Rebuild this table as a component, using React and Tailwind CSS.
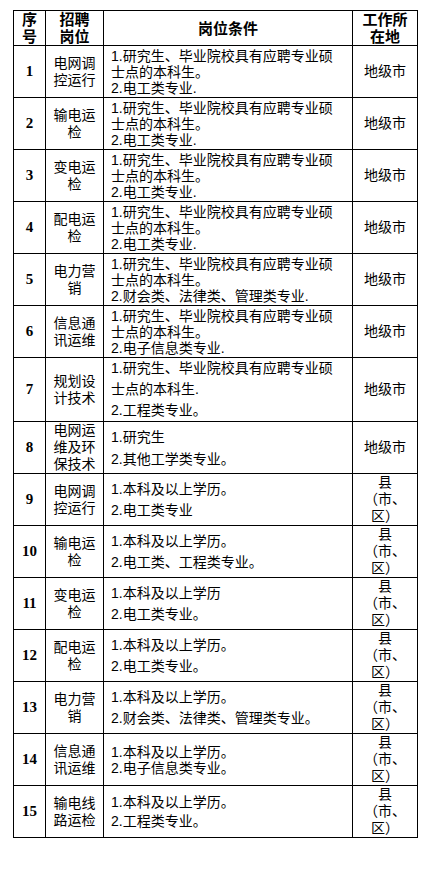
import React from "react";

const edu = "1.研究生、毕业院校具有应聘专业硕";

const rows = [
  { no: "1", job: ["电网调", "控运行"], cond: [edu, "士点的本科生。", "2.电工类专业."], place: "city", lh: "leading-[16px]" },
  { no: "2", job: ["输电运", "检"], cond: [edu, "士点的本科生。", "2.电工类专业."], place: "city", lh: "leading-[16px]" },
  { no: "3", job: ["变电运", "检"], cond: [edu, "士点的本科生。", "2.电工类专业."], place: "city", lh: "leading-[16px]" },
  { no: "4", job: ["配电运", "检"], cond: [edu, "士点的本科生。", "2.电工类专业."], place: "city", lh: "leading-[16px]" },
  { no: "5", job: ["电力营", "销"], cond: [edu, "士点的本科生。", "2.财会类、法律类、管理类专业."], place: "city", lh: "leading-[16px]" },
  { no: "6", job: ["信息通", "讯运维"], cond: [edu, "士点的本科生。", "2.电子信息类专业."], place: "city", lh: "leading-[16px]" },
  { no: "7", job: ["规划设", "计技术"], cond: [edu, "士点的本科生.", "2.工程类专业。"], place: "city", lh: "leading-[21px]", tall: true },
  { no: "8", job: ["电网运", "维及环", "保技术"], cond: ["1.研究生", "2.其他工学类专业。"], place: "city", lh: "leading-[22px]" },
  { no: "9", job: ["电网调", "控运行"], cond: ["1.本科及以上学历。", "2.电工类专业"], place: "county", lh: "leading-[21px]" },
  { no: "10", job: ["输电运", "检"], cond: ["1.本科及以上学历。", "2.电工类、工程类专业。"], place: "county", lh: "leading-[21px]" },
  { no: "11", job: ["变电运", "检"], cond: ["1.本科及以上学历", "2.电工类专业。"], place: "county", lh: "leading-[21px]" },
  { no: "12", job: ["配电运", "检"], cond: ["1.本科及以上学历。", "2.电工类专业。"], place: "county", lh: "leading-[21px]" },
  { no: "13", job: ["电力营", "销"], cond: ["1.本科及以上学历。", "2.财会类、法律类、管理类专业。"], place: "county", lh: "leading-[21px]" },
  { no: "14", job: ["信息通", "讯运维"], cond: ["1.本科及以上学历。", "2.电子信息类专业。"], place: "county", lh: "leading-[16px]" },
  { no: "15", job: ["输电线", "路运检"], cond: ["1.本科及以上学历。", "2.工程类专业。"], place: "county", lh: "leading-[19px]" },
];

const cell = "border border-black p-0 align-middle";

const App = () => {
  return (
    <div
      className="min-h-[877px] w-[424px] bg-white pt-[10px] pl-[13px] text-black"
      style={{ fontFamily: '"Liberation Sans", "Noto Sans CJK SC", sans-serif' }}
    >
      <table className="w-[405px] table-fixed border-collapse border border-black">
        <colgroup>
          <col className="w-[32px]" />
          <col className="w-[58px]" />
          <col className="w-[249px]" />
          <col className="w-[65px]" />
        </colgroup>
        <thead>
          <tr className="h-[35px] text-[15px] font-bold leading-[17px]">
            <th className={cell + " text-center"}>
              <div>序</div>
              <div>号</div>
            </th>
            <th className={cell + " text-center"}>
              <div>招聘</div>
              <div>岗位</div>
            </th>
            <th className={cell + " text-center"}>岗位条件</th>
            <th className={cell + " text-center"}>
              <div>工作所</div>
              <div>在地</div>
            </th>
          </tr>
        </thead>
        <tbody>
          {rows.map((r) => (
            <tr key={r.no} className={r.tall ? "h-[64px]" : "h-[52px]"}>
              <td
                className={cell + " text-center text-[15px] font-bold"}
                style={{ fontFamily: '"Liberation Serif", serif' }}
              >
                {r.no}
              </td>
              <td className={cell + " text-center text-[14px] leading-[17px]"}>
                {r.job.map((j) => (
                  <div key={j}>{j}</div>
                ))}
              </td>
              <td className={cell + " pl-[7px] text-[14px] whitespace-nowrap " + r.lh}>
                {r.cond.map((c, i) => (
                  <div key={i}>{c}</div>
                ))}
              </td>
              <td className={cell + " text-center text-[14px]"}>
                {r.place === "city" ? (
                  <div>地级市</div>
                ) : (
                  <div className="leading-[17px]">
                    <div>县</div>
                    <div>（市、</div>
                    <div>区）</div>
                  </div>
                )}
              </td>
            </tr>
          ))}
        </tbody>
      </table>
    </div>
  );
};

export default App;
